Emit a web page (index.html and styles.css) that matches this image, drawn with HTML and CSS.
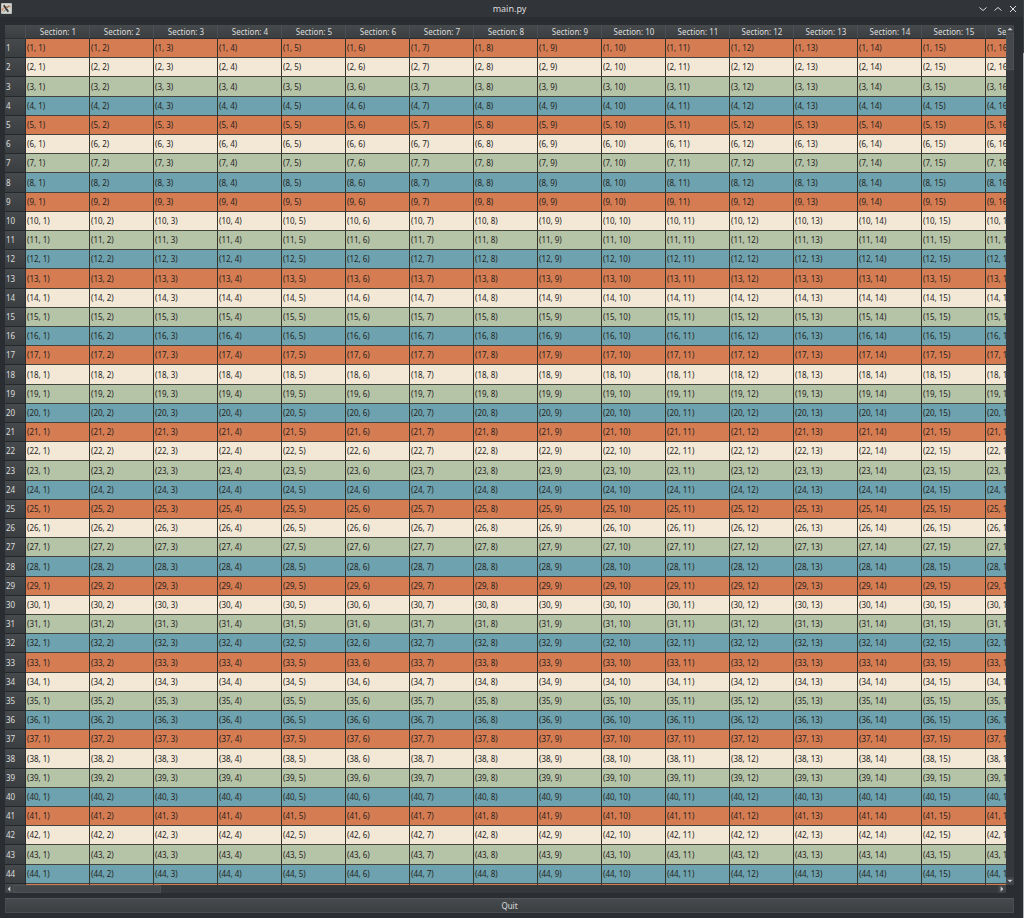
FILE: index.html
```
<!DOCTYPE html>
<html lang="en">
<head>
    <meta charset="utf-8">
    <title>main.py</title>
    <meta name="viewport" content="width=device-width, initial-scale=1">
    <link rel="stylesheet" href="styles.css">
</head>
<body>
    <div class="window">
        <header class="titlebar">
            <svg class="app-icon" viewBox="0 0 12 12" aria-hidden="true">
                <rect width="12" height="12" rx="1" fill="#b9bbb8"/>
                <rect x="1" y="1" width="10" height="10" fill="#d2d3cf"/>
                <path d="M1 8.500C2 5 5 3.500 10.500 4" fill="none" stroke="#d58a5c" stroke-width="1.500"/>
                <path d="M3 2.500L8 9.500" stroke="#333" stroke-width="1.800"/>
                <path d="M9 2.500L3 9.500" stroke="#555" stroke-width="0.800"/>
            </svg>
            <h1 class="title">main.py</h1>
            <div class="window-buttons">
                <button type="button" aria-label="Minimize"><svg viewBox="0 0 8 8"><path d="M0.500 2.500L4 5.500L7.500 2.500"/></svg></button>
                <button type="button" aria-label="Maximize"><svg viewBox="0 0 8 8"><path d="M0.500 5.500L4 2.500L7.500 5.500"/></svg></button>
                <button type="button" aria-label="Close"><svg viewBox="0 0 8 8"><path d="M1 1L7 7M7 1L1 7"/></svg></button>
            </div>
        </header>
        <main class="content">
            <div class="table-view">
                <div class="viewport">
                    <table class="grid">
                        <thead><tr id="sections"><td class="corner"></td></tr></thead>
                        <tbody id="rows"></tbody>
                    </table>
                </div>
                <div class="scrollbar vertical">
                    <button type="button" aria-label="Scroll up"><svg viewBox="0 0 6 6"><path d="M1 4L3 2L5 4Z"/></svg></button>
                    <div class="thumb"></div>
                    <button type="button" aria-label="Scroll down"><svg viewBox="0 0 6 6"><path d="M1 2L3 4L5 2Z"/></svg></button>
                </div>
                <div class="scrollbar horizontal">
                    <button type="button" aria-label="Scroll left"><svg viewBox="0 0 6 6"><path d="M4 1L2 3L4 5Z"/></svg></button>
                    <div class="thumb"></div>
                    <button type="button" aria-label="Scroll right"><svg viewBox="0 0 6 6"><path d="M2 1L4 3L2 5Z"/></svg></button>
                </div>
            </div>
            <button type="button" class="quit">Quit</button>
        </main>
    </div>
    <script src="main.js"></script>
</body>
</html>
```

FILE: styles.css
```
* {
    box-sizing: border-box;
}
body {
    margin: 0;
    background: linear-gradient(#3a4245 53px, #b5b7b9 53px);
    color: #dcdddd;
    font-family: "Noto Sans", sans-serif;
    font-size: 8px;
}
button {
    padding: 0;
    border: 0;
    color: inherit;
    font: inherit;
}
.window {
    display: flex;
    flex-direction: column;
    height: 100vh;
    margin-right: 1px;
    background: #2a2d31;
}
.titlebar {
    display: flex;
    flex: none;
    align-items: center;
    height: 17px;
    padding: 0 6px 0 1px;
    background: #313438;
}
.app-icon {
    width: 11px;
    height: 11px;
}
.title {
    flex: 1;
    margin: 0;
    padding-left: 28px;
    font-size: 9px;
    font-weight: normal;
    line-height: 12px;
    text-align: center;
}
.window-buttons {
    display: flex;
    gap: 7px;
}
.window-buttons button {
    width: 8px;
    height: 8px;
    background: none;
}
.window-buttons svg,
.scrollbar svg {
    display: block;
    width: 100%;
    height: 100%;
}
.window-buttons path {
    fill: none;
    stroke: #dcdddd;
}
.content {
    display: flex;
    flex: 1;
    flex-direction: column;
    gap: 5px;
    min-height: 0;
    padding: 8px 9px 5px 5px;
}
.table-view {
    display: grid;
    flex: 1;
    grid-template-columns: 1fr 8px;
    grid-template-rows: 1fr 8px;
    min-height: 0;
}
.viewport {
    min-width: 0;
    min-height: 0;
    overflow: hidden;
}
.grid {
    width: 1045px;
    border-collapse: separate;
    border-spacing: 0;
    table-layout: fixed;
}
.grid td,
.grid th {
    width: 64px;
    height: 19px;
    padding: 0 1px;
    overflow: hidden;
    border-right: 1px solid #33332e;
    border-bottom: 1px solid #44443e;
    font-weight: normal;
    line-height: 12px;
    text-align: left;
    white-space: nowrap;
}
.grid thead td,
.grid thead th {
    height: 14px;
    padding-left: 2px;
    border-right-color: #4c5054;
    border-bottom-color: #2a2d31;
    background: linear-gradient(#464a4d, #3a3e41);
    text-align: center;
}
.grid .corner,
.grid tbody th {
    width: 21px;
}
.grid tbody th {
    border-right-color: #2a2d31;
    border-bottom-color: #25282b;
    background: linear-gradient(#464a4d, #3a3e41);
}
.grid tbody td {
    color: #26221e;
}
.grid tbody tr:nth-child(5n+3) td,
.grid tbody tr:nth-child(5n+3) th {
    height: 20px;
}
.orange {
    background: #d67c52;
}
.cream {
    background: #f2e8d5;
}
.green {
    background: #b5c3a7;
}
.blue {
    background: #6da2ae;
}
.scrollbar {
    display: flex;
    background: #35393c;
}
.scrollbar button {
    flex: none;
    width: 8px;
    height: 8px;
    background: #414548;
}
.scrollbar path {
    fill: #c9cbcc;
}
.scrollbar button:last-child {
    margin-top: auto;
}
.thumb {
    background: #44484b;
    border: 1px solid #4d5154;
}
.vertical {
    flex-direction: column;
}
.vertical .thumb {
    height: 37px;
}
.horizontal {
    align-items: center;
}
.horizontal button:last-child {
    margin: 0 0 0 auto;
}
.horizontal .thumb {
    width: 148px;
    height: 8px;
}
.quit {
    flex: none;
    height: 15px;
    border: 1px solid #4a4e51;
    border-top-color: #54585b;
    background: linear-gradient(#464a4d, #3b3f42);
    line-height: 12px;
}
```

FILE: main.js
```
var colors = ['orange', 'cream', 'green', 'blue'];
var sections = document.getElementById('sections');
var rows = document.getElementById('rows');

function addCell(row, tag, text, className) {
    var cell = document.createElement(tag);
    cell.textContent = text;
    if (className) {
        cell.className = className;
    }
    row.appendChild(cell);
}

for (var c = 1; c <= 16; c++) {
    addCell(sections, 'th', 'Section: ' + c);
}

for (var r = 1; r <= 45; r++) {
    var row = document.createElement('tr');
    addCell(row, 'th', r);
    for (var i = 1; i <= 16; i++) {
        addCell(row, 'td', '(' + r + ', ' + i + ')', colors[(r - 1) % 4]);
    }
    rows.appendChild(row);
}
```
